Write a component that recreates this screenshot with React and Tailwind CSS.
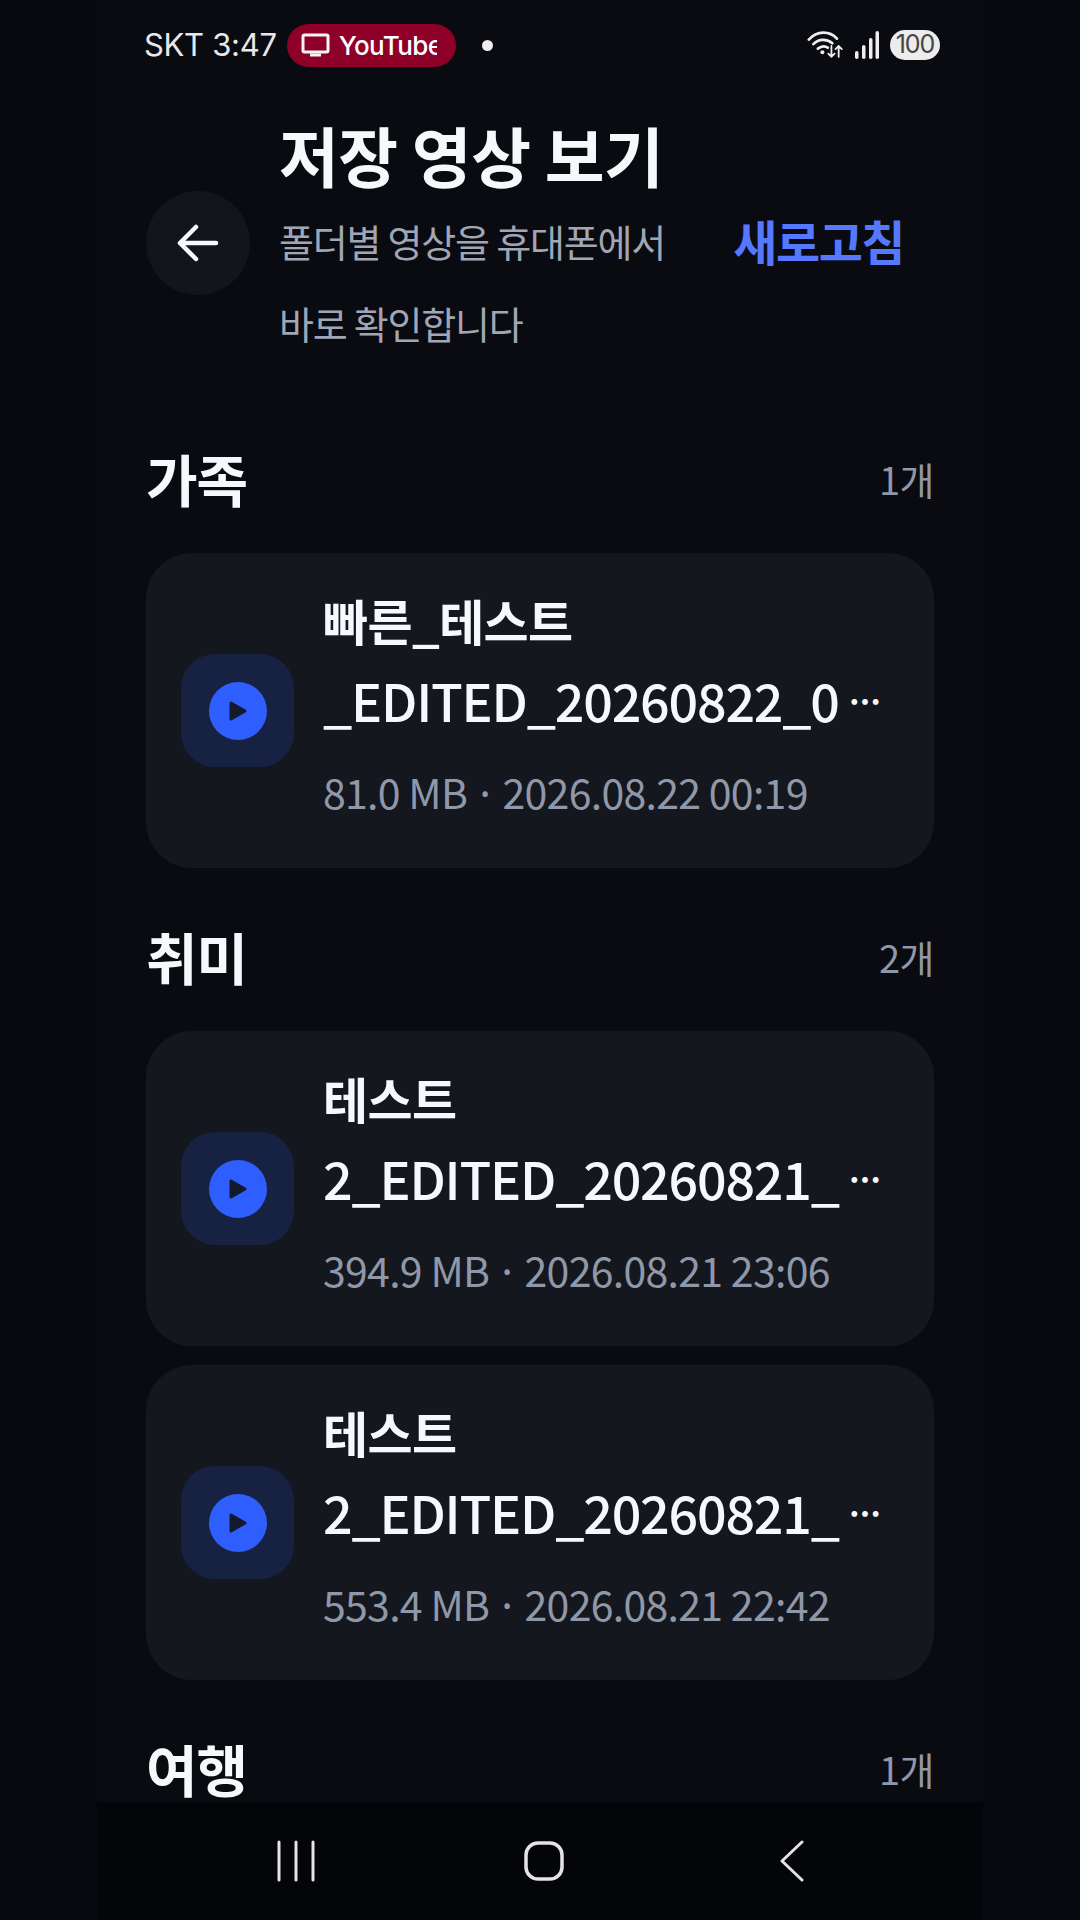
import React from 'react'

const FONT = "font-['Noto_Sans_CJK_KR','Noto_Sans',sans-serif]"

const SECTIONS = [
  {
    name: '가족',
    count: '1개',
    items: [{ line1: '빠른_테스트', line2: '_EDITED_20260822_0', size: '81.0 MB', date: '2026.08.22 00:19' }],
  },
  {
    name: '취미',
    count: '2개',
    items: [
      { line1: '테스트', line2: '2_EDITED_20260821_', size: '394.9 MB', date: '2026.08.21 23:06' },
      { line1: '테스트', line2: '2_EDITED_20260821_', size: '553.4 MB', date: '2026.08.21 22:42' },
    ],
  },
  { name: '여행', count: '1개', items: [] },
]

function StatusBar() {
  return (
    <div className="h-[90px] shrink-0 flex items-center pl-[47px] pr-[43px] text-[#e8e8ea]">
      <span className="font-['Inter',sans-serif] text-[31px] tracking-[-0.3px] whitespace-nowrap">SKT 3:47</span>
      <div className="ml-[10px] w-[169px] h-[43px] rounded-full bg-[#8f0029] flex items-center pl-[14px]">
        <svg width="30" height="24" viewBox="0 0 30 24" fill="none" stroke="#f5f5f5" strokeWidth="3">
          <rect x="2" y="2" width="25" height="17" rx="1.5" />
          <path d="M9 22h11" />
        </svg>
        <span className="ml-[8px] w-[98px] overflow-hidden font-['Inter',sans-serif] font-medium text-[26px] tracking-[-0.6px] text-white whitespace-nowrap">YouTube</span>
      </div>
      <span className="ml-[26px] w-[11px] h-[11px] rounded-full bg-[#eeeeee]" />
      <div className="ml-auto flex items-center">
        <svg width="38" height="30" viewBox="0 0 42 32" fill="none" stroke="#eeeeee" strokeLinecap="round">
          <path d="M2 10C11 0 25 0 33 9" strokeWidth="3" />
          <path d="M7 15c6-6 15-6 21-1" strokeWidth="3" />
          <path d="M12 20c4-3 8-3 11-1" strokeWidth="3" />
          <circle cx="17" cy="24" r="2.2" fill="#eeeeee" stroke="none" />
          <path d="M27 17v12M23.5 25.5l3.5 3.5 3.5-3.5M35 29V17M31.5 20.5l3.5-3.5 3.5 3.5" strokeWidth="2" />
        </svg>
        <svg className="ml-[10px]" width="24" height="28" viewBox="0 0 24 28" fill="#eeeeee">
          <rect x="0" y="20" width="3.5" height="8" rx="1.75" />
          <rect x="7" y="14" width="3.5" height="14" rx="1.75" />
          <rect x="14" y="7" width="3.5" height="21" rx="1.75" />
          <rect x="20.5" y="0" width="3.5" height="28" rx="1.75" />
        </svg>
        <span className="ml-[11px] w-[50px] h-[30px] rounded-full bg-[#ececec] flex items-center justify-center font-['Inter',sans-serif] text-[25px] tracking-[-1px] text-[#444444]">100</span>
      </div>
    </div>
  )
}

function Header() {
  return (
    <div className={`flex items-center pt-[32px] pl-[49px] pr-[79px] ${FONT}`}>
      <button className="w-[104px] h-[104px] rounded-full bg-[#12151b] flex items-center justify-center shrink-0">
        <svg width="42" height="38" viewBox="0 0 42 38" fill="none" stroke="#f7f8fb" strokeWidth="4.5" strokeLinecap="round" strokeLinejoin="round">
          <path d="M39 19H3M19 3 3 19l16 16" />
        </svg>
      </button>
      <div className="ml-[29px] flex-1 min-w-0">
        <div className="h-[70px] mb-[8px] -translate-y-[3px] leading-[70px] text-[65px] font-bold tracking-[-0.5px] text-[#f7f8fb] whitespace-nowrap">저장 영상 보기</div>
        <div className="leading-[82px] text-[38px] tracking-[-1.2px] text-[#a0a6b6] whitespace-nowrap">
          폴더별 영상을 휴대폰에서
          <br />
          바로 확인합니다
        </div>
      </div>
      <span className="mb-[6px] text-[48px] font-bold tracking-[-1.5px] text-[#5678ff] whitespace-nowrap">새로고침</span>
    </div>
  )
}

function VideoCard({ item }) {
  return (
    <div className="h-[315px] rounded-[46px] bg-[#14171e] flex items-center pl-[35px] pr-[50px]">
      <div className="w-[113px] h-[113px] rounded-[34px] bg-[#172242] flex items-center justify-center shrink-0">
        <div className="w-[58px] h-[58px] rounded-full bg-[#2f5eff] flex items-center justify-center">
          <svg width="20" height="22" viewBox="0 0 20 22" fill="#14192d" stroke="#14192d" strokeWidth="3" strokeLinejoin="round">
            <path d="M3 3v16l14-8z" />
          </svg>
        </div>
      </div>
      <div className={`ml-[29px] flex-1 min-w-0 pt-[26px] ${FONT}`}>
        <div className="leading-[80px] text-[49px] font-bold tracking-[-0.6px] text-[#f7f8fb]">{item.line1}</div>
        <div className="flex items-center leading-[80px] text-[52px] font-medium tracking-[-1.2px] text-[#f7f8fb] whitespace-nowrap">
          {item.line2}
          <span className="ml-auto mr-[5px] text-[32px] font-black tracking-[-2px]">⋯</span>
        </div>
        <div className="mt-[26px] mb-[52px] leading-[50px] text-[41px] tracking-[-0.7px] text-[#9097a8] whitespace-nowrap">
          {item.size}
          <span className="mx-[-2px]"> · </span>
          {item.date}
        </div>
      </div>
    </div>
  )
}

function Section({ section, first }) {
  return (
    <section className={first ? 'mt-[79px]' : 'mt-[53px]'}>
      <div className={`h-[70px] flex items-center justify-between ${FONT}`}>
        <h2 className="text-[56px] font-bold tracking-[-1px] text-[#f7f8fb]">{section.name}</h2>
        <span className="text-[38px] tracking-[-0.5px] text-[#9097a8]">{section.count}</span>
      </div>
      {section.items.length > 0 && (
        <div className="mt-[40px] flex flex-col gap-[19px]">
          {section.items.map((item) => (
            <VideoCard key={item.size} item={item} />
          ))}
        </div>
      )}
    </section>
  )
}

function NavBar() {
  return (
    <div className="h-[118px] shrink-0 bg-[#040508] flex items-center justify-center pl-[8px]">
      <div className="w-[248px] flex justify-center">
        <svg width="40" height="42" viewBox="0 0 40 42" fill="none" stroke="#e4e4e6" strokeWidth="3" strokeLinecap="round">
          <path d="M3 2v38M20 2v38M37 2v38" />
        </svg>
      </div>
      <div className="w-[248px] flex justify-center">
        <svg width="40" height="42" viewBox="0 0 40 42" fill="none" stroke="#e4e4e6" strokeWidth="3.5">
          <rect x="2" y="3" width="36" height="36" rx="12" />
        </svg>
      </div>
      <div className="w-[248px] flex justify-center">
        <svg width="24" height="42" viewBox="0 0 24 42" fill="none" stroke="#e4e4e6" strokeWidth="3" strokeLinecap="round" strokeLinejoin="round">
          <path d="M22 2 2 21l20 19" />
        </svg>
      </div>
    </div>
  )
}

export default function App() {
  return (
    <div className="w-[1080px] h-[1920px] overflow-hidden bg-[#060910] flex justify-center">
      <div className="w-[886px] h-full bg-[#0a0b10] flex flex-col">
        <StatusBar />
        <div className="flex-1 min-h-0 overflow-hidden">
          <Header />
          <div className="px-[49px]">
            {SECTIONS.map((s, i) => (
              <Section key={s.name} section={s} first={i === 0} />
            ))}
          </div>
        </div>
        <NavBar />
      </div>
    </div>
  )
}
